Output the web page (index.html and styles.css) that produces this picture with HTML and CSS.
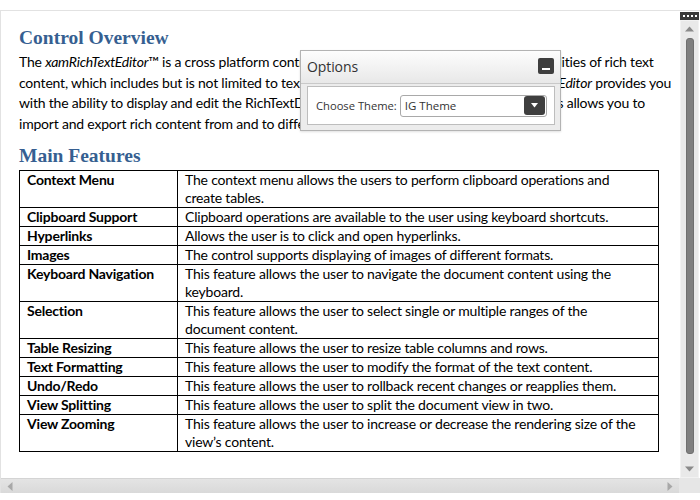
FILE: index.html
```html
<!DOCTYPE html>
<html>
<head>
<meta charset="utf-8">
<link rel="stylesheet" href="styles.css">
</head>
<body>
<div class="editor">
  <div class="doc">
    <h1 class="heading">Control Overview</h1>
    <p class="para">
      <span class="ln">The <i>xamRichTextEditor</i>™ is a cross platform control that provides its users with all the capabilities of rich text</span><br>
      <span class="ln">content, which includes but is not limited to text, images, tables, and more. The <i>xamRichTextEditor</i> provides you</span><br>
      <span class="ln">with the ability to display and edit the RichTextDocument content and all of its features. This allows you to</span><br>
      <span class="ln">import and export rich content from and to different formats.</span>
    </p>
    <h2 class="heading heading-2">Main Features</h2>
    <table class="features">
      <tr><td class="name">Context Menu</td><td class="desc">The context menu allows the users to perform clipboard operations and<br>create tables.</td></tr>
      <tr><td class="name">Clipboard Support</td><td class="desc">Clipboard operations are available to the user using keyboard shortcuts.</td></tr>
      <tr><td class="name">Hyperlinks</td><td class="desc">Allows the user is to click and open hyperlinks.</td></tr>
      <tr><td class="name">Images</td><td class="desc">The control supports displaying of images of different formats.</td></tr>
      <tr><td class="name">Keyboard Navigation</td><td class="desc">This feature allows the user to navigate the document content using the<br>keyboard.</td></tr>
      <tr><td class="name">Selection</td><td class="desc">This feature allows the user to select single or multiple ranges of the<br>document content.</td></tr>
      <tr><td class="name">Table Resizing</td><td class="desc">This feature allows the user to resize table columns and rows.</td></tr>
      <tr><td class="name">Text Formatting</td><td class="desc">This feature allows the user to modify the format of the text content.</td></tr>
      <tr><td class="name">Undo/Redo</td><td class="desc">This feature allows the user to rollback recent changes or reapplies them.</td></tr>
      <tr><td class="name">View Splitting</td><td class="desc">This feature allows the user to split the document view in two.</td></tr>
      <tr><td class="name">View Zooming</td><td class="desc">This feature allows the user to increase or decrease the rendering size of the<br>view’s content.</td></tr>
    </table>
  </div>

  <div class="vscroll">
    <div class="grip"><i></i><i></i><i></i><i></i></div>
    <div class="vtrack">
      <svg class="arrow" width="9" height="6" viewBox="0 0 9 6"><path d="M0 5.5 L4.5 0.5 L9 5.5 Z" fill="#8a8a8a"/></svg>
      <div class="vthumb"></div>
      <svg class="arrow" width="9" height="6" viewBox="0 0 9 6"><path d="M0 0.5 L4.5 5.5 L9 0.5 Z" fill="#8a8a8a"/></svg>
    </div>
  </div>

  <div class="hscroll">
    <svg class="arrow" width="6" height="9" viewBox="0 0 6 9"><path d="M5.5 0 L0.5 4.5 L5.5 9 Z" fill="#a8a8a8"/></svg>
    <svg class="arrow" width="6" height="9" viewBox="0 0 6 9"><path d="M0.5 0 L5.5 4.5 L0.5 9 Z" fill="#a8a8a8"/></svg>
  </div>
  <div class="corner"></div>

  <div class="options">
    <div class="options-head">
      <span class="options-title">Options</span>
      <span class="minimize"><i></i></span>
    </div>
    <div class="options-body">
      <div class="options-box">
        <span class="label">Choose Theme:</span>
        <div class="combo">
          <span class="combo-value">IG Theme</span>
          <span class="combo-btn"><svg width="7" height="5" viewBox="0 0 7 5"><path d="M0 0 L7 0 L3.5 4.5 Z" fill="#ffffff"/></svg></span>
        </div>
      </div>
    </div>
  </div>
</div>
</body>
</html>
```

FILE: styles.css
```css
html, body {
  margin: 0;
  padding: 0;
  background: #ffffff;
}

body {
  padding-top: 10px;
  font-family: Lato, "Open Sans", sans-serif;
}

.editor {
  position: relative;
  width: 699px;
  height: 482px;
  border-top: 1px solid #e2e2e2;
  border-left: 1px solid #e2e2e2;
  display: grid;
  grid-template-columns: 678px 21px;
  grid-template-rows: 467px 15px;
}

.doc {
  padding: 15px 0 0 18px;
  overflow: hidden;
  color: #000;
  font-size: 14px;
  letter-spacing: -0.2px;
}

.heading {
  margin: 0 0 2px 0;
  font-family: "Liberation Serif", serif;
  font-weight: bold;
  font-size: 19.5px;
  line-height: 24px;
  color: #365f91;
  letter-spacing: 0;
}

.heading-2 {
  margin: 10px 0 2px 0;
}

.para {
  margin: 0;
  line-height: 20.5px;
}

.ln {
  white-space: nowrap;
}

.features {
  border-collapse: collapse;
  width: 640px;
  line-height: 18px;
}

.features td {
  border: 1px solid #000;
  padding: 0 6px 0 7px;
  vertical-align: top;
  white-space: nowrap;
}

.features .name {
  width: 144px;
  font-weight: bold;
}

/* vertical scrollbar */
.vscroll {
  display: flex;
  flex-direction: column;
  padding: 1px 1px 0 1px;
  background: #ffffff;
}

.grip {
  height: 8px;
  background: #3a3a3a;
  display: flex;
  align-items: center;
  justify-content: center;
  gap: 2px;
}

.grip i {
  width: 2px;
  height: 2px;
  background: #ffffff;
}

.vtrack {
  flex: 1;
  display: flex;
  flex-direction: column;
  align-items: center;
  background: #e9e9e9;
  border: 1px solid #f2f2f2;
  padding: 5px 0 5px 0;
  gap: 6px;
}

.vthumb {
  flex: 1;
  width: 8px;
  background: #7f7f7f;
  border: 1px solid #6f6f6f;
  border-radius: 3px;
  box-sizing: border-box;
  margin-bottom: 6px;
}

/* horizontal scrollbar */
.hscroll {
  display: flex;
  align-items: center;
  justify-content: space-between;
  padding: 0 6px;
  background: linear-gradient(#e4e4e4, #d9d9d9);
  border-top: 1px solid #d4d4d4;
}

.corner {
  background: #e6e6e6;
}

/* options floating panel */
.options {
  position: absolute;
  left: 299px;
  top: 39px;
  width: 259px;
  border: 1px solid #b3b3b3;
  background: #ececec;
  box-shadow: 0 1px 2px rgba(0, 0, 0, 0.12);
  font-family: "Open Sans", sans-serif;
  color: #333333;
}

.options-head {
  height: 33px;
  box-sizing: border-box;
  display: flex;
  align-items: flex-start;
  justify-content: space-between;
  padding: 6px 6px 0 6px;
  background: linear-gradient(#fdfdfd, #e8e8e8);
  border-bottom: 1px solid #c9c9c9;
}

.options-title {
  font-size: 14px;
  line-height: 20px;
  letter-spacing: -0.1px;
}

.minimize {
  width: 16px;
  height: 16px;
  background: #3e3e3e;
  border-radius: 2px;
  display: flex;
  align-items: flex-end;
  justify-content: center;
  padding-bottom: 4px;
  box-sizing: border-box;
  margin-top: 1px;
}

.minimize i {
  width: 8px;
  height: 2px;
  background: #ffffff;
}

.options-body {
  padding: 2px 5px 5px 6px;
}

.options-box {
  height: 37px;
  background: #ffffff;
  border: 1px solid #bdbdbd;
  display: flex;
  align-items: center;
  padding: 0 7px 0 8px;
  gap: 3px;
}

.label {
  font-size: 11.2px;
  letter-spacing: 0;
}

.combo {
  flex: 1;
  height: 22px;
  box-sizing: border-box;
  border: 1px solid #a9a9a9;
  border-radius: 3px;
  display: flex;
  align-items: center;
  justify-content: space-between;
  padding: 0 1px 0 4px;
}

.combo-value {
  font-size: 11.5px;
}

.combo-btn {
  width: 21px;
  height: 19px;
  background: #3f3f3f;
  border-radius: 3px;
  display: flex;
  align-items: center;
  justify-content: center;
}
```
